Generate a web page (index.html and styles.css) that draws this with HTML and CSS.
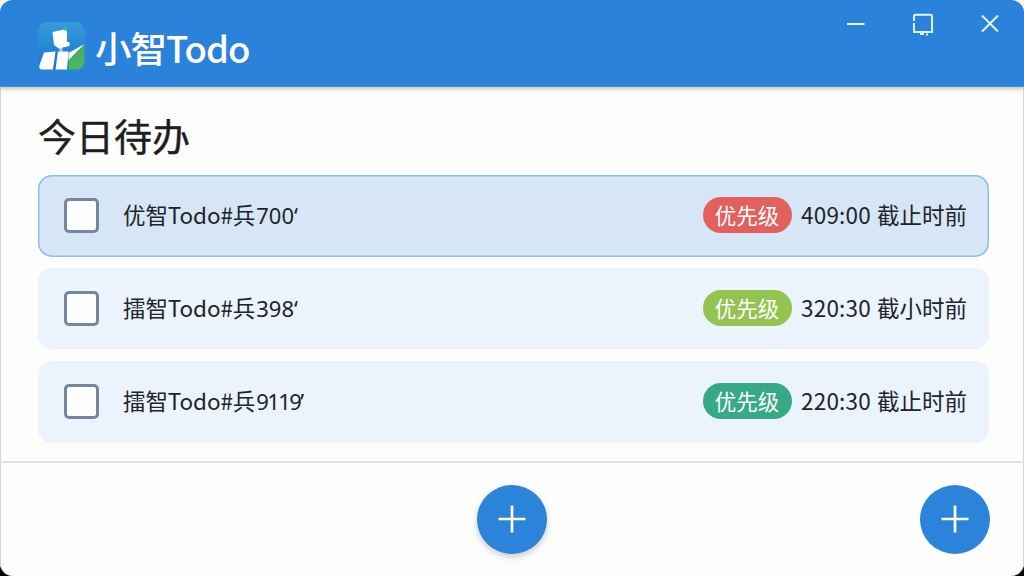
FILE: index.html
```html
<!DOCTYPE html>
<html lang="zh-CN">
<head>
<meta charset="utf-8">
<title>小智Todo</title>
<link rel="stylesheet" href="styles.css">
</head>
<body>
<div class="window">
  <header class="titlebar">
    <div class="brand">
      <svg class="logo" viewBox="0 0 48 48">
        <defs>
          <linearGradient id="sky" x1="0" y1="0" x2="0" y2="1"><stop offset="0" stop-color="#359cda"/><stop offset="1" stop-color="#1776d2"/></linearGradient>
          <linearGradient id="leaf" x1="0" y1="0" x2="0" y2="1"><stop offset="0" stop-color="#3fa66e"/><stop offset="1" stop-color="#4dbb57"/></linearGradient>
        </defs>
        <rect x="0" y="0" width="46.500" height="47.500" rx="9" fill="url(#sky)"/>
        <path d="M46.500 22V38.500Q46.500 47.500 38 47.500H30.500V37Z" fill="url(#leaf)"/>
        <path d="M14.500 10 26 7.500 29 8.500V20H31.500V24L25 25.500 21.500 27 16 23Z" fill="#fff"/>
        <path d="M21.500 27 24.500 25.500V29.500H21.500Z" fill="#a8d2f2"/>
        <path d="M6 30.500 17.500 29.500 15 47.500H4Q.5 47.500 1.500 43Z" fill="#fff"/>
        <path d="M20 29.500H30.500L29 47.500H17.500Z" fill="#fff"/>
        <path d="M30.500 31 46.500 22 30.500 38Z" fill="#fff"/>
        <path d="M25.500 5h3.500v4l-3-1z" fill="#32b878"/>
      </svg>
      <h1 class="name">小智Todo</h1>
    </div>
    <div class="controls">
      <svg class="control" viewBox="0 0 24 24"><path d="M3 12H20.500"/></svg>
      <svg class="control" viewBox="0 0 24 24"><path d="M3 9V4Q3 2.700 4.300 2.700H19.500Q21 2.700 21 4V20H3V11M9 22H13M15 22.500H17"/></svg>
      <svg class="control" viewBox="0 0 24 24"><path d="M4 3.500 20 19.500M20 3.500 4 19.500"/></svg>
    </div>
  </header>
  <main class="content">
    <h2 class="heading">今日待办</h2>
    <ul class="list">
      <li class="task task-active">
        <span class="checkbox"></span>
        <span class="title">优智Todo#兵<span class="number">700‘</span></span>
        <span class="badge badge-red">优先级</span>
        <span class="due"><span class="time">409:00</span><span>截止时前</span></span>
      </li>
      <li class="task">
        <span class="checkbox"></span>
        <span class="title">擂智Todo#兵<span class="number">398‘</span></span>
        <span class="badge badge-lime">优先级</span>
        <span class="due"><span class="time">320:30</span><span>截小时前</span></span>
      </li>
      <li class="task">
        <span class="checkbox"></span>
        <span class="title">擂智Todo#兵<span class="number number-long">9119’</span></span>
        <span class="badge badge-teal">优先级</span>
        <span class="due"><span class="time">220:30</span><span>截止时前</span></span>
      </li>
    </ul>
  </main>
  <footer class="footer">
    <button class="add add-raised" aria-label="添加"><svg class="plus" viewBox="0 0 28 28"><path d="M14 .5V27.500M.5 14H27.500"/></svg></button>
    <button class="add add-end" aria-label="添加"><svg class="plus" viewBox="0 0 28 28"><path d="M14 .5V27.500M.5 14H27.500"/></svg></button>
  </footer>
</div>
</body>
</html>
```

FILE: styles.css
```css
* { box-sizing: border-box; }
body {
  margin: 0;
  background: linear-gradient(#f6f5ef 50%, #000 50%);
  height: 576px;
  overflow: hidden;
  font-family: "Noto Sans CJK SC", sans-serif;
  color: #222427;
}
.window {
  width: 1024px;
  height: 576px;
  display: flex;
  flex-direction: column;
  background: #fdfdfc;
  border-radius: 13px;
  overflow: hidden;
  box-shadow: inset 1px 0 #ccd5da, inset -1px 0 #d5d8da;
}
.titlebar {
  height: 87px;
  flex: none;
  display: flex;
  justify-content: space-between;
  padding: 0 22px 0 38px;
  background: #2a82da;
  border-bottom: 1px solid #4e91ce;
  box-shadow: 0 1px 5px rgba(90, 75, 65, .45);
}
.brand { display: flex; align-items: center; gap: 9px; padding-top: 6px; }
.logo { width: 48px; height: 48px; }
.name { margin: 0; padding-top: 3px; color: #fff; font-size: 36.500px; line-height: 48px; font-weight: 500; letter-spacing: -1px; }
.controls { display: flex; gap: 43px; padding-top: 12px; }
.control { width: 24px; height: 24px; fill: none; stroke: #e3f6ff; stroke-width: 1.9; }
.content { height: 376px; flex: none; padding: 22px 35px 0 38px; border-bottom: 2px solid #e3e3e3; }
.heading { margin: 0 0 15px; font-size: 38px; line-height: 51px; font-weight: 400; color: #1e1f21; -webkit-text-stroke: .4px #1e1f21; }
.list { margin: 0; padding: 0; list-style: none; display: grid; gap: 12px; }
.task {
  height: 81.500px;
  display: flex;
  align-items: center;
  padding: 0 22px 0 26px;
  border-radius: 14px;
  background: #ebf3fc;
}
.task-active { background: #d6e6f7; box-shadow: inset 0 0 0 1.500px #8dbfe4; }
.list .task-active { margin-bottom: -1px; }
.checkbox { width: 35px; height: 35px; border: 3px solid #74879f; border-radius: 5px; background: #fdfefe; margin-right: 24px; }
.title { flex: 1; font-size: 22.500px; line-height: 30px; padding-bottom: 2px; white-space: nowrap; letter-spacing: -.1px; }
.number { font-family: "Noto Sans", "Noto Sans CJK SC", sans-serif; font-size: 22px; letter-spacing: 0; margin-left: 1px; }
.number-long { letter-spacing: -1.600px; }
.badge {
  width: 89px;
  height: 36px;
  border-radius: 18px;
  color: #fff;
  font-size: 21.500px;
  line-height: 35px;
  text-align: center;
  margin: 0 9.500px 1px 0;
}
.badge-red { background: #e2605d; }
.badge-lime { background: #93c351; }
.badge-teal { background: #36aa84; }
.due { width: 166px; padding-bottom: 3px; display: flex; justify-content: space-between; font-size: 22.500px; line-height: 30px; white-space: nowrap; }
.time { letter-spacing: .2px; }
.footer { flex: 1; display: grid; grid-template-columns: 1fr 70px 1fr; padding: 22px 34px 0; }
.add { width: 70px; height: 69px; padding: 0 0 1px; border: 0; border-radius: 50%; background: #2c84da; display: grid; place-items: center; }
.add-raised { grid-column: 2; box-shadow: 0 3px 6px rgba(70, 80, 100, .28); }
.add-end { grid-column: 3; justify-self: end; }
.plus { width: 28px; height: 28px; fill: none; stroke: #fff; stroke-width: 2.700; }
```
